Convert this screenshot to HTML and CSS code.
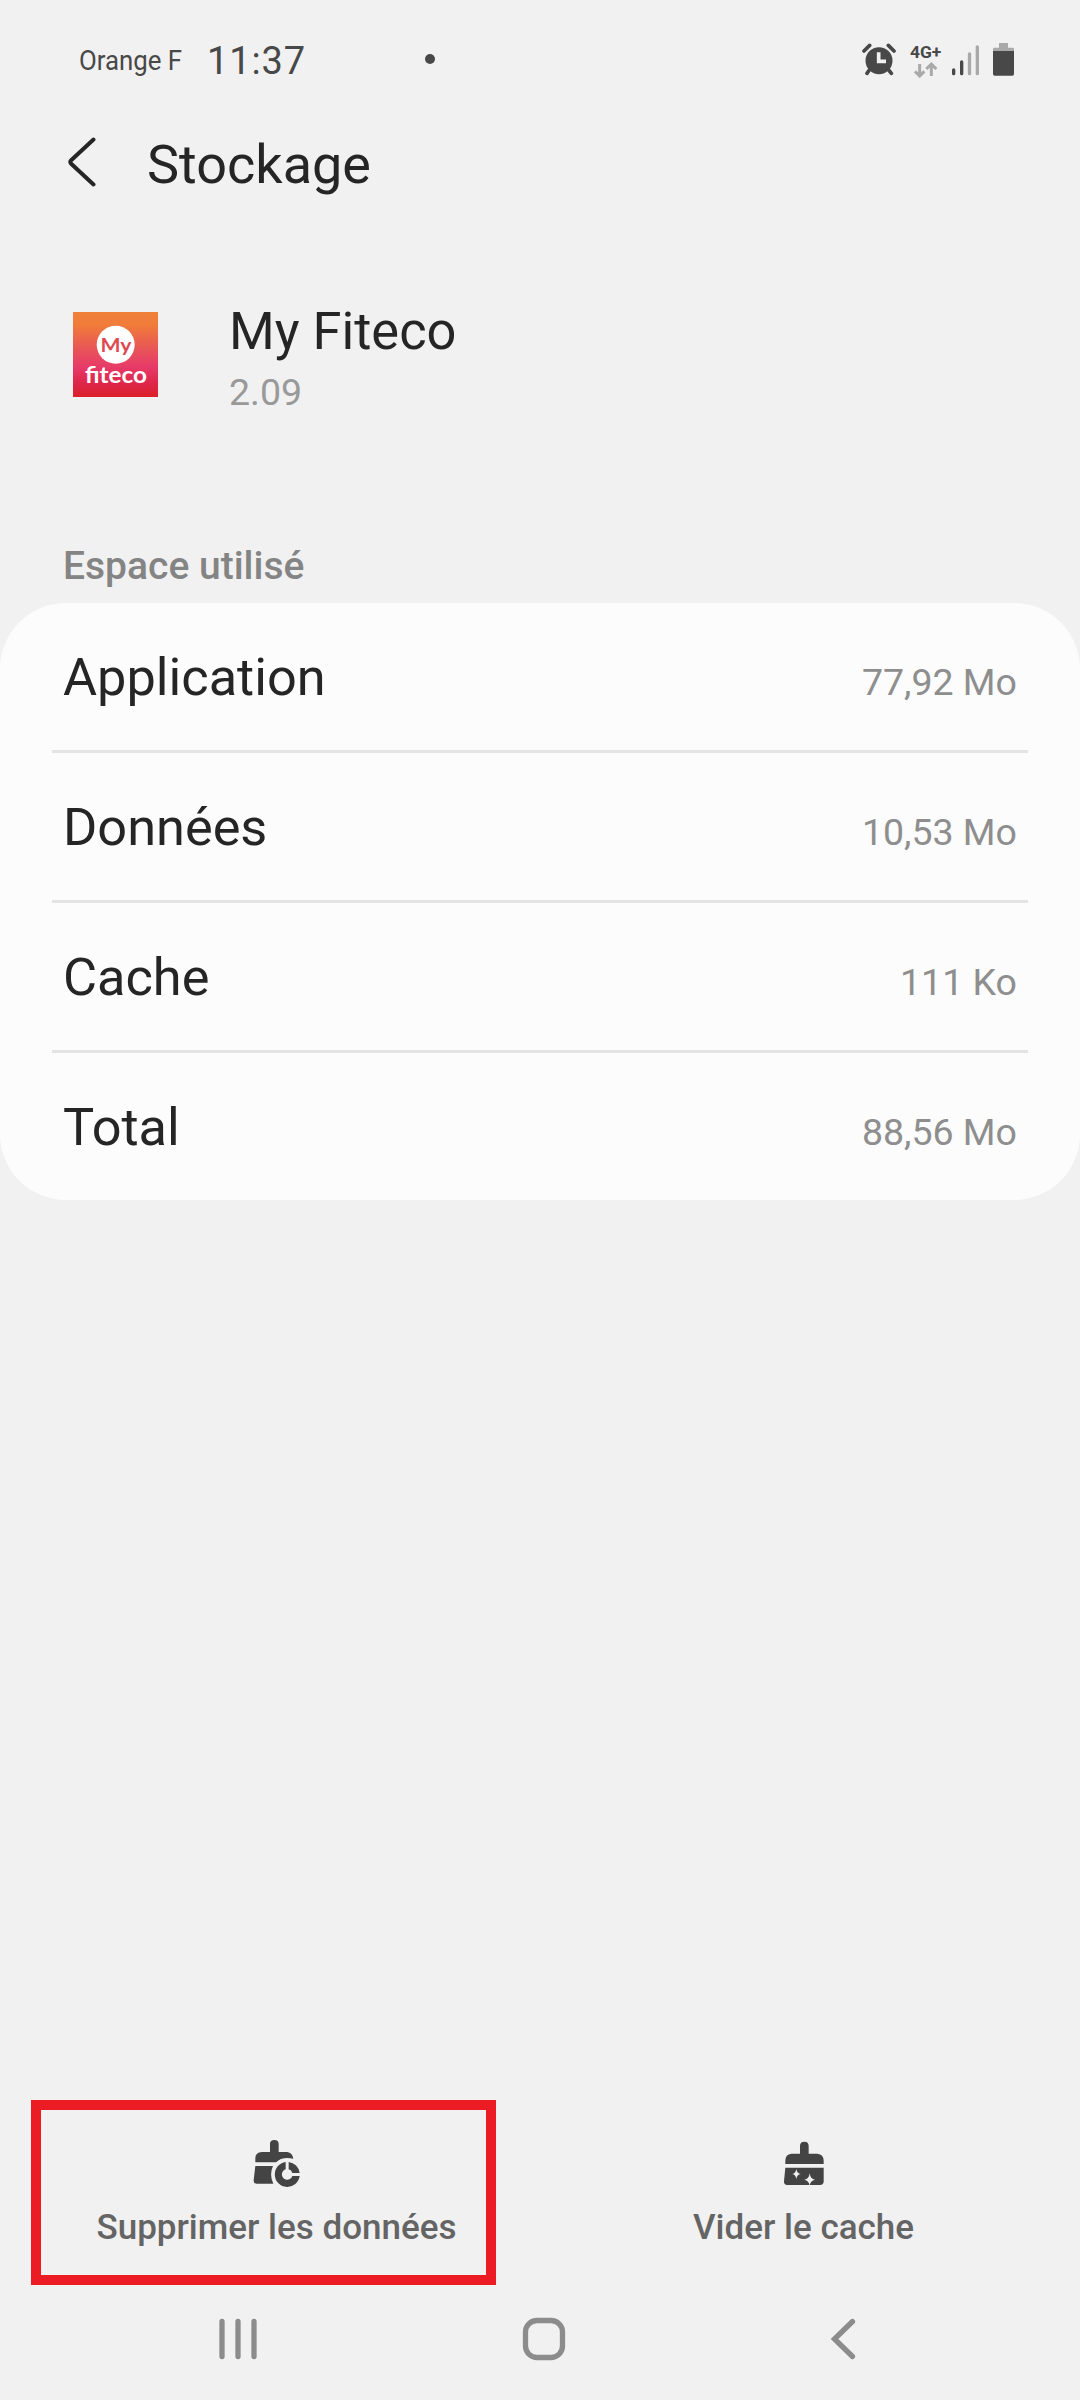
FILE: index.html
```html
<!DOCTYPE html>
<html lang="fr">
<head>
<meta charset="utf-8">
<title>Stockage</title>
<link rel="stylesheet" href="styles.css">
</head>
<body>
<div class="screen">
  <div class="status">
    <svg class="carrier" width="104" height="40" viewBox="0 0 104 40"><text x="0" y="28" textLength="103" lengthAdjust="spacingAndGlyphs">Orange F</text></svg>
    <span class="clock">11:37</span>
    <span class="dot"></span>
    <div class="indicators">
      <svg class="alarm" width="35" height="36" viewBox="66 66 105 108">
        <circle cx="117" cy="122" r="40.5" fill="#484848"/>
        <path d="M72 93L89 76M145 76L162 93M88 150L81 160M146 150L154 160" stroke="#484848" stroke-width="11" stroke-linecap="round" fill="none"/>
        <path d="M116 97V124H138" stroke="#f1f1f1" stroke-width="11" fill="none"/>
      </svg>
      <svg class="network" width="33" height="36" viewBox="207 66 99 108">
        <text x="210" y="115" textLength="94" lengthAdjust="spacingAndGlyphs">4G+</text>
        <path d="M239 132V167M225 154L239 168L253 154M274 168V133M259 147L274 132L289 147" stroke="#a9a9a9" stroke-width="9" fill="none"/>
      </svg>
      <svg class="signal" width="29" height="36" viewBox="333 66 87 108" stroke-width="10" stroke-linecap="round">
        <path d="M341 150V161M365 126V161" stroke="#484848"/>
        <path d="M388.500 102V161M412 81V161" stroke="#a9a9a9"/>
      </svg>
      <svg class="battery" width="23" height="36" viewBox="456 66 69 108">
        <path d="M477 69H504V83H518Q522 83 522 87V93H459V87Q459 83 463 83H477Z" fill="#a9a9a9"/>
        <path d="M459 93H522V162Q522 167 517 167H464Q459 167 459 162Z" fill="#484848"/>
      </svg>
    </div>
  </div>

  <header class="header">
    <svg width="30" height="52" viewBox="0 0 30 52"><path d="M26.500 3.500L4.200 24.200Q2.500 26 4.200 27.800L26.500 48.500" fill="none" stroke="#252525" stroke-width="4" stroke-linecap="round"/></svg>
    <h1 class="title">Stockage</h1>
  </header>

  <section class="app">
    <svg class="app-icon" width="85" height="85" viewBox="0 0 85 85">
      <defs><linearGradient id="sunset" x1="0" y1="0" x2="0" y2="1">
        <stop offset="0" stop-color="#f08038"/><stop offset=".15" stop-color="#f07c3a"/><stop offset=".45" stop-color="#e85358"/><stop offset=".65" stop-color="#e73a69"/><stop offset=".85" stop-color="#dd2548"/><stop offset="1" stop-color="#dc2028"/>
      </linearGradient></defs>
      <rect width="85" height="85" fill="url(#sunset)"/>
      <circle cx="42.700" cy="32.700" r="19" fill="#fff"/>
      <text class="logo-my" x="27.500" y="40.300" textLength="31" lengthAdjust="spacingAndGlyphs">My</text>
      <text class="logo-name" x="12" y="70.500" textLength="62" lengthAdjust="spacingAndGlyphs">fiteco</text>
    </svg>
    <div class="app-text">
      <div class="app-name">My Fiteco</div>
      <div class="app-version">2.09</div>
    </div>
  </section>

  <h2 class="section-title">Espace utilisé</h2>
  <ul class="card">
    <li class="row"><span class="label">Application</span><span class="value">77,92 Mo</span></li>
    <li class="row"><span class="label">Données</span><span class="value">10,53 Mo</span></li>
    <li class="row"><span class="label">Cache</span><span class="value">111 Ko</span></li>
    <li class="row"><span class="label">Total</span><span class="value">88,56 Mo</span></li>
  </ul>

  <div class="actions">
    <div class="action">
      <svg width="48" height="50" viewBox="699 177 144 150" fill="#444">
        <path d="M750 216V192Q750 180 763 180Q776 180 776 192V216H802Q817 218 820 236Q786 229 768 247H706V236Q706 216 726 216Z"/>
        <path d="M706 258H759Q747 284 760 311H710Q700 311 701 300Z"/>
        <path d="M797 246A37.500 37.500 0 1 0 839 288H817A16 16 0 1 1 797 268Z"/>
        <path d="M806 246A37.500 37.500 0 0 1 839 279H817Q815 270 806 268Z"/>
      </svg>
      <span class="action-label">Supprimer les données</span>
      <span class="frame"></span>
    </div>
    <div class="action">
      <svg width="42" height="50" viewBox="369 87 126 150" fill="#444">
        <path d="M420 131V108Q420 95 433 95Q446 95 446 108V131H472Q491 133 491 152V162H376V152Q376 133 394 131Z"/>
        <path d="M376 173H491V214Q491 225 480 225H382Q371 225 372 214Z"/>
        <path d="M409 177Q411 190 422 192Q411 194 409 207Q407 194 397 192Q407 190 409 177ZM449 190Q451 207 465 209Q451 211 449 228Q447 211 433 209Q447 207 449 190Z" fill="#f1f1f1"/>
      </svg>
      <span class="action-label">Vider le cache</span>
    </div>
  </div>

  <nav class="nav">
    <svg width="40" height="46" viewBox="0 0 40 46"><path d="M4 5.500V40.500M20 5.500V40.500M36 5.500V40.500"/></svg>
    <svg width="46" height="46" viewBox="0 0 46 46"><rect x="4.500" y="4.500" width="37" height="37" rx="11.500"/></svg>
    <svg width="28" height="46" viewBox="0 0 28 46"><path d="M23.500 5.500L5.500 23L23.500 40.500"/></svg>
  </nav>
</div>
</body>
</html>
```
FILE: styles.css
```css
* { box-sizing: border-box; }
body {
  margin: 0;
  background: #f1f1f1;
  font-family: Roboto, "Liberation Sans", sans-serif;
  color: #252525;
}
svg { display: block; flex: none; }
.screen {
  width: 1080px;
  height: 2400px;
  display: flex;
  flex-direction: column;
  overflow: hidden;
}

.status {
  height: 118px;
  padding: 0 65px 0 79px;
  display: flex;
  align-items: center;
  color: #484848;
}
.carrier { margin-top: 6px; }
.carrier text { font-size: 28px; fill: #484848; }
.clock {
  margin: 4px 0 0 24px;
  width: 110px;
  font-size: 38px;
  line-height: 46px;
  letter-spacing: 0.9px;
}
.dot {
  margin-left: 108px;
  width: 10px;
  height: 10px;
  border-radius: 50%;
  background: #484848;
}
.indicators { margin-left: auto; display: flex; align-items: center; margin-top: 2px; }
.network { margin-left: 12px; }
.network text { font-size: 50px; font-weight: 700; fill: #484848; }
.signal { margin-left: 9px; fill: none; }
.battery { margin-left: 12px; }

.header {
  height: 92px;
  padding: 0 0 0 67px;
  display: flex;
  align-items: center;
  padding-bottom: 4px;
  gap: 50px;
}
.title {
  margin: 5px 0 0;
  font-size: 54px;
  font-weight: 400;
  line-height: 64px;
}

.app {
  height: 330px;
  padding: 92px 0 0 73px;
  display: flex;
  align-items: flex-start;
  gap: 71px;
}
.app-icon { margin-top: 10px; }
.logo-my { font: 700 19.5px Lato, sans-serif; fill: #dd4a50; }
.logo-name { font: 700 22px Lato, sans-serif; fill: #fff; }
.app-name { font-size: 52.4px; line-height: 60px; margin-top: -1px; }
.app-version { margin-top: 8px; font-size: 37.5px; line-height: 46px; color: #999; }

.section-title {
  height: 63px;
  margin: 0;
  padding: 1px 0 0 63px;
  font-size: 39px;
  font-weight: 500;
  line-height: 50px;
  color: #848484;
}

.card {
  margin: 0;
  padding: 0 52px;
  list-style: none;
  background: #fcfcfc;
  border-radius: 66px;
}
.row {
  height: 150px;
  padding: 44px 11px 0;
  display: flex;
  justify-content: space-between;
  align-items: baseline;
  border-bottom: 3px solid #e4e4e4;
}
.row:last-child { height: 147px; border-bottom: 0; }
.label { font-size: 52.3px; line-height: 60px; }
.value { font-size: 37.5px; line-height: 46px; color: #8e8e8e; }

.actions {
  margin-top: auto;
  height: 185px;
  padding: 0 13px;
  display: flex;
}
.action {
  position: relative;
  flex: 1;
  padding-top: 39px;
  display: flex;
  flex-direction: column;
  align-items: center;
}
.action-label {
  margin-top: 18px;
  font-size: 35px;
  font-weight: 500;
  line-height: 42px;
  color: #646464;
}
.frame {
  position: absolute;
  left: 18px;
  top: 0;
  width: 465px;
  height: 185px;
  border: 10px solid #eb1c24;
}

.nav {
  height: 115px;
  padding: 31px 223px 0 218px;
  display: flex;
  justify-content: space-between;
}
.nav svg { fill: none; stroke: #8c8c8c; stroke-width: 5.3px; stroke-linecap: round; }
```
